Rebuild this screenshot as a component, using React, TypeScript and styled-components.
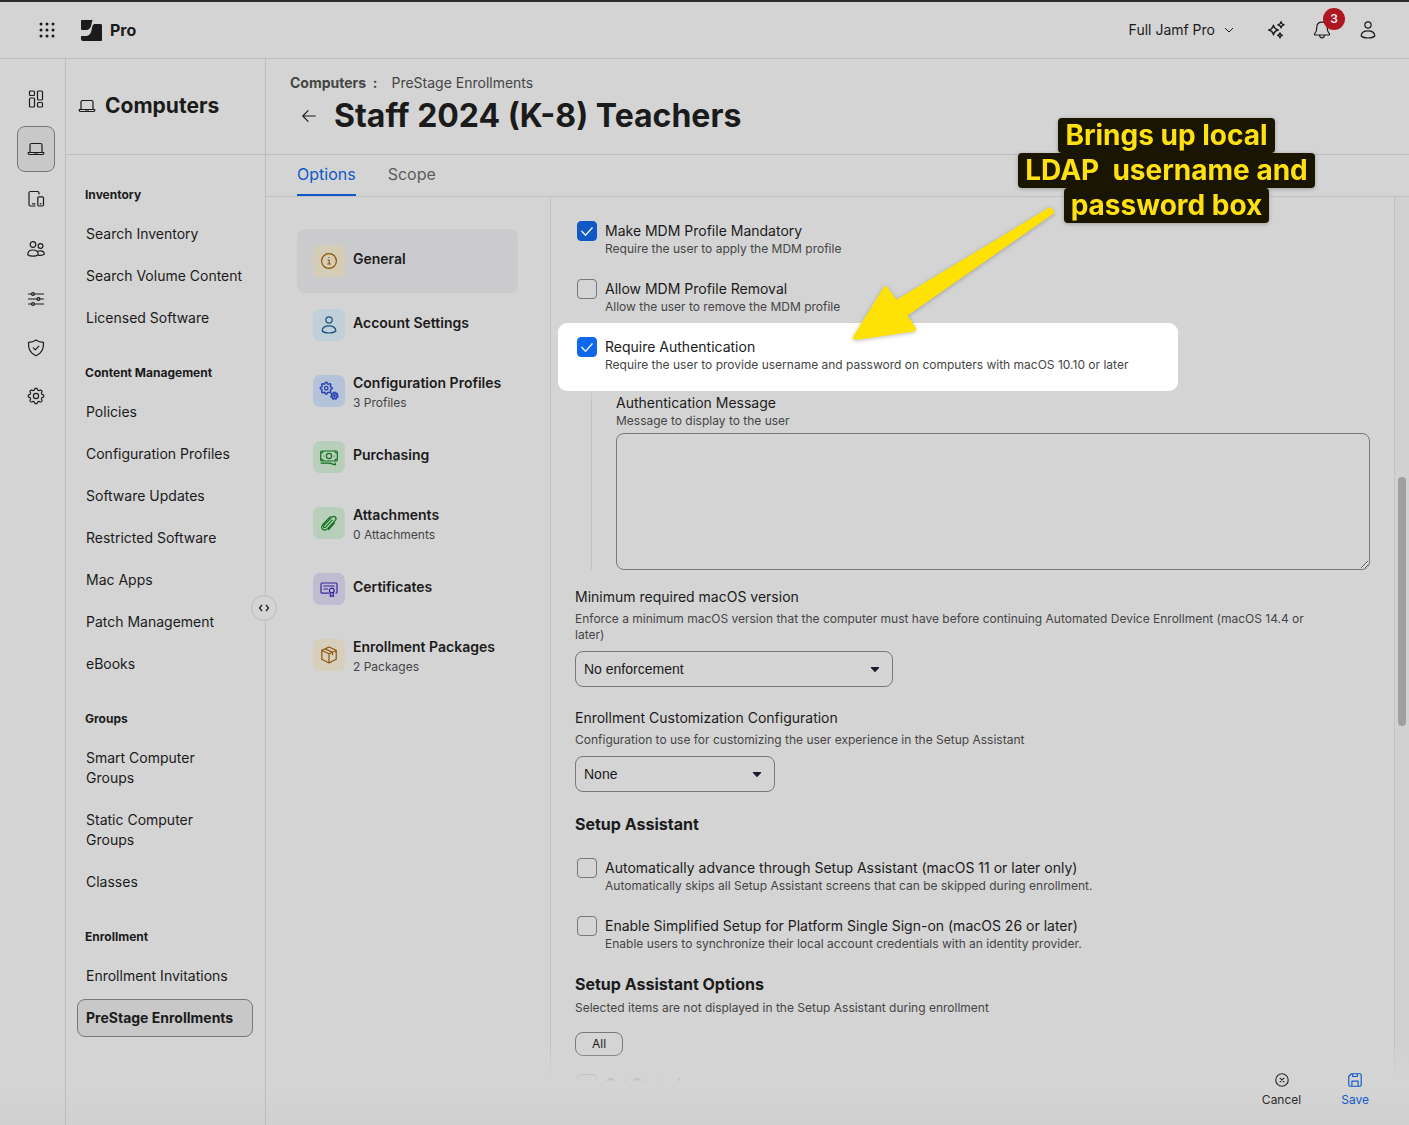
import React, { useState } from "react";
import styled, { createGlobalStyle } from "styled-components";

const c = {
  bg: "#d4d4d4",
  line: "#bdbdbd",
  softLine: "#c3c3c3",
  outline: "#777777",
  text: "#1b1b1b",
  muted: "#454545",
  selected: "#c8c8c8",
  blue: "#1158c7",
};

const GlobalStyle = createGlobalStyle`
  *, *::before, *::after { box-sizing: border-box; }
  body { margin: 0; }
  button, textarea, select, input { font: inherit; color: inherit; margin: 0; }
  button { background: none; border: 0; padding: 0; cursor: pointer; }
  a { color: inherit; text-decoration: none; }
  h1, h2, h3, p, ul { margin: 0; padding: 0; }
  ul { list-style: none; }
`;

const Shell = styled.div`
  position: relative;
  display: flex;
  flex-direction: column;
  height: 100vh;
  overflow: hidden;
  border-top: 2px solid #2f2d2e;
  background: linear-gradient(to bottom, ${c.bg} calc(100% - 36px), #d0d0d0);
  color: ${c.text};
  font-family: Inter, "Liberation Sans", sans-serif;
  font-size: 14px;
  line-height: 20px;
`;

const TopBar = styled.header`
  display: flex;
  align-items: center;
  justify-content: space-between;
  flex: none;
  height: 57px;
  padding: 0 32px 0 38px;
  border-bottom: 1px solid ${c.line};
`;

const Brand = styled.div`
  display: flex;
  align-items: center;
  gap: 8px;
  font-size: 16px;
  font-weight: 700;
`;

const IconButton = styled.button`
  position: relative;
  display: flex;
  align-items: center;
  justify-content: center;
  width: 18px;
  height: 20px;
`;

const AppsButton = styled(IconButton)`
  margin-right: 17px;
`;

const TopActions = styled.div`
  display: flex;
  align-items: center;
  gap: 28px;
`;

const SiteButton = styled.button`
  display: flex;
  align-items: center;
  gap: 8px;
  margin-right: 4px;
`;

const Badge = styled.span`
  position: absolute;
  left: 10px;
  bottom: 10px;
  display: flex;
  align-items: center;
  justify-content: center;
  width: 22px;
  height: 22px;
  border-radius: 50%;
  background: #ae1722;
  color: #ececec;
  font-size: 12px;
  font-weight: 600;
`;

const Body = styled.div`
  display: flex;
  flex: 1;
  min-height: 0;
`;

const Rail = styled.nav`
  display: flex;
  flex-direction: column;
  align-items: center;
  gap: 4px;
  flex: none;
  width: 66px;
  padding: 17px 0 0 6px;
  border-right: 1px solid ${c.line};
`;

const RailButton = styled.button<{ $active?: boolean; $compact?: boolean }>`
  display: flex;
  align-items: center;
  justify-content: center;
  width: 38px;
  height: ${(p) => (p.$compact ? 44 : 46)}px;
  border: 1px solid ${(p) => (p.$active ? c.outline : "transparent")};
  border-radius: 8px;
  background: ${(p) => (p.$active ? c.selected : "transparent")};
`;

const Side = styled.aside`
  position: relative;
  flex: none;
  width: 200px;
  border-right: 1px solid ${c.line};
`;

const SideHeader = styled.div`
  display: flex;
  align-items: center;
  gap: 9px;
  height: 96px;
  padding: 0 12px 2px;
  border-bottom: 1px solid ${c.line};
`;

const SideTitle = styled.h2`
  font-size: 21px;
  line-height: 28px;
  font-weight: 700;
`;

const SideNav = styled.nav`
  display: flex;
  flex-direction: column;
  gap: 28px;
  padding: 32px 12px 0 11px;
`;

const NavHeading = styled.h3`
  padding: 0 8px;
  margin-bottom: 12px;
  font-size: 12px;
  line-height: 16px;
  font-weight: 700;
`;

const NavList = styled.ul`
  display: flex;
  flex-direction: column;
  gap: 4px;
`;

const NavLink = styled.a<{ $active?: boolean }>`
  display: block;
  padding: 8px;
  border: 1px solid ${(p) => (p.$active ? c.outline : "transparent")};
  border-radius: 8px;
  background: ${(p) => (p.$active ? c.selected : "transparent")};
  font-weight: ${(p) => (p.$active ? 700 : 400)};
`;

const CollapseHandle = styled.button`
  position: absolute;
  top: 536px;
  right: -12px;
  display: flex;
  align-items: center;
  justify-content: center;
  width: 26px;
  height: 26px;
  border: 1px solid ${c.line};
  border-radius: 50%;
  background: ${c.bg};
`;

const Main = styled.main`
  display: flex;
  flex-direction: column;
  flex: 1;
  min-width: 0;
`;

const PageHeader = styled.div`
  flex: none;
  height: 96px;
  padding: 14px 24px 0;
  border-bottom: 1px solid ${c.line};
`;

const Crumbs = styled.div`
  display: flex;
  gap: 14px;
  color: ${c.muted};
`;

const TitleRow = styled.div`
  display: flex;
  align-items: center;
  gap: 16px;
  padding: 3px 0 0 10px;
`;

const Title = styled.h1`
  font-size: 32px;
  line-height: 40px;
  font-weight: 700;
`;

const Tabs = styled.div`
  display: flex;
  gap: 32px;
  flex: none;
  height: 42px;
  padding: 0 31px;
  border-bottom: 1px solid ${c.softLine};
`;

const Tab = styled.button<{ $active: boolean }>`
  height: 41px;
  padding-bottom: 1px;
  border-bottom: 2px solid ${(p) => (p.$active ? c.blue : "transparent")};
  color: ${(p) => (p.$active ? c.blue : "#5c5c5c")};
  font-size: 16px;
`;

const Workspace = styled.div`
  position: relative;
  display: flex;
  flex: 1;
  min-height: 0;
  overflow: hidden;

  &::after {
    content: "";
    position: absolute;
    inset: auto 0 0 0;
    height: 32px;
    background: linear-gradient(to bottom, rgba(212, 212, 212, 0), rgba(212, 212, 212, 0.8) 75%, rgba(212, 212, 212, 0.9));
    pointer-events: none;
  }
`;

const PayloadList = styled.ul`
  flex: none;
  width: 285px;
  padding: 32px 32px 0 31px;
  border-right: 1px solid ${c.softLine};
`;

const Payload = styled.button<{ $active?: boolean }>`
  display: flex;
  align-items: center;
  gap: 8px;
  width: 100%;
  height: ${(p) => (p.$active ? 64 : 66)}px;
  padding: 0 16px ${(p) => (p.$active ? 0 : 2)}px;
  border-radius: 8px;
  background: ${(p) => (p.$active ? "#cbcbcd" : "transparent")};
  text-align: left;
`;

const PayloadIcon = styled.span<{ $bg: string; $fg: string }>`
  display: flex;
  align-items: center;
  justify-content: center;
  flex: none;
  width: 32px;
  height: 32px;
  border-radius: 7px;
  background: ${(p) => p.$bg};
  color: ${(p) => p.$fg};
`;

const PayloadText = styled.span<{ $sub: boolean }>`
  display: flex;
  flex-direction: column;
  padding: ${(p) => (p.$sub ? "4px 0 0" : "0 0 4px")};
  font-weight: 600;
  white-space: nowrap;
`;

const PayloadSub = styled.small`
  color: ${c.muted};
  font-size: 12px;
  font-weight: 400;
`;

const Form = styled.form`
  display: flex;
  flex-direction: column;
  align-items: flex-start;
  flex: 1;
  min-width: 0;
  padding: 24px 24px 0;
  overflow: hidden;
`;

const CheckRow = styled.div<{ $spotlight?: boolean }>`
  display: flex;
  flex: none;
  gap: 8px;
  margin-bottom: 22px;
  padding-left: 2px;
  ${(p) =>
    p.$spotlight &&
    `
    align-self: flex-start;
    width: 620px;
    max-width: 100%;
    margin: -14px 0 0 -17px;
    padding: 14px 16px 18px 19px;
    border-radius: 9px;
    background: #ffffff;
  `}
`;

const Box = styled.span`
  position: relative;
  display: block;
  flex: none;
  width: 20px;
  height: 20px;

  svg {
    position: absolute;
    inset: 0;
    pointer-events: none;
  }
`;

const BoxInput = styled.input<{ $bright?: boolean }>`
  appearance: none;
  display: block;
  width: 20px;
  height: 20px;
  border: 1px solid ${c.outline};
  border-radius: 4px;

  &:checked {
    border-color: ${(p) => (p.$bright ? "#0f68ec" : c.blue)};
    background: ${(p) => (p.$bright ? "#0f68ec" : c.blue)};
  }
`;

const Label = styled.label`
  display: block;
`;

const Help = styled.p<{ $gap?: number }>`
  max-width: 760px;
  margin-top: ${(p) => p.$gap ?? 0}px;
  color: ${c.muted};
  font-size: 12px;
  line-height: 16px;
`;

const Nested = styled.div`
  display: flex;
  flex-direction: column;
  flex: none;
  align-self: stretch;
  margin: 2px 0 17px 16px;
  padding-left: 24px;
  border-left: 1px solid ${c.softLine};
`;

const MessageArea = styled.textarea`
  display: block;
  width: 100%;
  height: 137px;
  margin-top: 4px;
  padding: 8px;
  border: 1px solid ${c.outline};
  border-radius: 8px;
  background: transparent;
  resize: vertical;
`;

const Field = styled.div<{ $last?: boolean }>`
  flex: none;
  margin-bottom: ${(p) => (p.$last ? 22 : 21)}px;
`;

const SelectWrap = styled.div<{ $width: number }>`
  position: relative;
  width: ${(p) => p.$width}px;
  max-width: 100%;
  margin-top: 8px;

  svg {
    position: absolute;
    top: 16px;
    right: 12px;
    pointer-events: none;
  }
`;

const Select = styled.select`
  appearance: none;
  width: 100%;
  height: 36px;
  padding: 0 32px 0 8px;
  border: 1px solid ${c.outline};
  border-radius: 8px;
  background: transparent;
  font-family: "Liberation Sans", Arial, sans-serif;
`;

const SectionTitle = styled.h2<{ $gap: number }>`
  flex: none;
  margin-bottom: ${(p) => p.$gap}px;
  font-size: 16px;
  line-height: 20px;
  font-weight: 700;
`;

const AllButton = styled.button`
  flex: none;
  width: 48px;
  height: 24px;
  margin: 16px 0 18px;
  border: 1px solid ${c.outline};
  border-radius: 8px;
  font-size: 12px;
  line-height: 16px;
`;

const ScrollTrack = styled.div`
  flex: none;
  width: 15px;
  padding: 280px 3px 0;
  border-left: 1px solid ${c.softLine};
  background: #d1d1d1;
`;

const ScrollThumb = styled.div`
  width: 8px;
  height: 249px;
  border-radius: 4px;
  background: #9f9f9f;
`;

const Footer = styled.footer`
  position: relative;
  display: flex;
  justify-content: flex-end;
  gap: 40px;
  flex: none;
  height: 52px;
  margin-top: -8px;
  padding-right: 40px;
`;

const FooterButton = styled.button<{ $primary?: boolean }>`
  display: flex;
  flex-direction: column;
  align-items: center;
  align-self: flex-start;
  gap: 5px;
  color: ${(p) => (p.$primary ? c.blue : "#2c2c2c")};
  font-size: 12px;
  line-height: 16px;
`;

const Note = styled.div`
  position: absolute;
  top: 116px;
  right: 91px;
  width: 303px;
  color: #ffe010;
  font-size: 28px;
  line-height: 35px;
  font-weight: 700;
  text-align: center;
  white-space: pre;
  filter: drop-shadow(0 1px 2px rgba(0, 0, 0, 0.25));
`;

const NoteText = styled.span`
  display: inline-block;
  height: 35px;
  padding: 0 7px;
  border-radius: 4px;
  background: #191500;
  vertical-align: top;
`;

const Arrow = styled.svg`
  position: absolute;
  top: 198px;
  right: 346px;
  filter: drop-shadow(0 1px 2px rgba(0, 0, 0, 0.25));
`;

type IconProps = { size?: number; w?: number; children: React.ReactNode };

const Icon = ({ size = 18, w = 1.2, children }: IconProps) => (
  <svg
    width={size}
    height={size}
    viewBox="0 0 18 18"
    fill="none"
    stroke="currentColor"
    strokeWidth={w}
    strokeLinecap="round"
    strokeLinejoin="round"
    aria-hidden="true"
  >
    {children}
  </svg>
);

const gearPath = (cx: number, cy: number, r: number, teeth: number, depth: number) => {
  const points: string[] = [];
  const steps = teeth * 12;
  for (let i = 0; i < steps; i++) {
    const a = (i / steps) * Math.PI * 2;
    const wave = Math.max(-1, Math.min(1, Math.cos(a * teeth) * 1.8));
    const rr = r + (depth / 2) * wave;
    points.push(`${(cx + rr * Math.sin(a)).toFixed(2)} ${(cy - rr * Math.cos(a)).toFixed(2)}`);
  }
  return `M${points.join("L")}Z`;
};

const AppsIcon = () => (
  <svg width="18" height="18" viewBox="0 0 18 18" fill="currentColor" aria-hidden="true">
    {[3, 9, 15].map((y) => [3, 9, 15].map((x) => <circle key={`${x}-${y}`} cx={x} cy={y} r="1.5" />))}
  </svg>
);

const Logo = () => (
  <svg width="21" height="21" viewBox="0 0 21 21" fill="currentColor" aria-hidden="true">
    <path d="M1 0h10.700c-.8 1.200-.9 2.600-1.200 4.200-.7 3.700-2.300 5.800-6 5.800H1.600C.6 10 0 9.300 0 8.400V1c0-.6.4-1 1-1z" />
    <path d="M14 4h5.500c1 0 1.500.6 1.500 1.500V20c0 .6-.4 1-1 1H2c-1.200 0-2-.8-2-2v-3h4.500c4 0 5.400-2.600 6.100-6 .7-3.400.9-6 3.400-6z" />
  </svg>
);

const LaptopIcon = () => (
  <Icon>
    <path d="M3 12.500V5a1.500 1.500 0 0 1 1.500-1.500h9A1.500 1.500 0 0 1 15 5v7.500M1.200 12.500h15.600v.6a1.400 1.400 0 0 1-1.400 1.400H2.600a1.400 1.400 0 0 1-1.400-1.400zM7.500 12.900h3" />
  </Icon>
);

const DashboardIcon = () => (
  <Icon>
    <rect x="2.500" y="1" width="5" height="4.500" rx="1" />
    <rect x="2.500" y="8" width="5" height="9" rx="1" />
    <rect x="10.500" y="1" width="5" height="9" rx="1" />
    <rect x="10.500" y="12.500" width="5" height="4.500" rx="1" />
  </Icon>
);

const DevicesIcon = () => (
  <Icon>
    <path d="M12 4V3a1.500 1.500 0 0 0-1.500-1.500h-7A1.500 1.500 0 0 0 2 3v11.500A1.500 1.500 0 0 0 3.500 16H8M5.500 13.800H8" />
    <rect x="10.800" y="6.800" width="5.700" height="9.200" rx="1.200" />
    <path d="M13.200 13.800h.9" />
  </Icon>
);

const UsersIcon = () => (
  <Icon>
    <circle cx="6" cy="4.500" r="2.800" />
    <circle cx="13.500" cy="6" r="2.400" />
    <path d="M.8 14.700c0-3 2.200-4.700 5.200-4.700s5.200 1.700 5.200 4.700c-1.200 1-3 1.500-5.200 1.500S2 15.700.8 14.700zM11 11.300c.7-.3 1.500-.5 2.400-.5 2.300 0 3.900 1.300 3.900 3.400-.8.8-2 1.200-3.600 1.200-1 0-1.800-.1-2.500-.5" />
  </Icon>
);

const SlidersIcon = () => (
  <Icon>
    <path d="M1.500 4H4.500M7.500 4h9M1.500 9H10M13 9h3.500M1.500 14H4.500M7.500 14h9" />
    <circle cx="6" cy="4" r="1.400" />
    <circle cx="11.500" cy="9" r="1.400" />
    <circle cx="6" cy="14" r="1.400" />
  </Icon>
);

const ShieldIcon = () => (
  <Icon>
    <path d="M9 1c2 1.500 4.500 2.300 7.500 2.400.4 6-1.700 11-7.500 13.400C3.200 14.400 1.100 9.400 1.500 3.400 4.500 3.300 7 2.500 9 1zM6.300 8.900l2 2 3.500-3.800" />
  </Icon>
);

const GearIcon = () => (
  <Icon>
    <path d={gearPath(9, 9, 6.9, 8, 1.6)} />
    <circle cx="9" cy="9" r="2.600" />
  </Icon>
);

const UserIcon = () => (
  <Icon>
    <circle cx="9" cy="4" r="3.200" />
    <path d="M2.200 15c0-3.200 2.800-5.200 6.800-5.200s6.800 2 6.800 5.200c-1.300 1.300-3.700 2-6.800 2s-5.500-.7-6.800-2z" />
  </Icon>
);

const SparkleIcon = () => (
  <Icon w={1.4}>
    <path d="M6.500 4.200c.6 3 1.800 4.200 4.800 4.800-3 .6-4.200 1.800-4.800 4.800C5.900 10.800 4.700 9.600 1.700 9c3-.6 4.200-1.800 4.800-4.800zM14 .8c.4 1.900 1.100 2.600 3 3-1.900.4-2.600 1.100-3 3-.4-1.900-1.100-2.600-3-3 1.900-.4 2.600-1.100 3-3zM13 12c.3 1.500.9 2.100 2.400 2.400-1.500.3-2.100.9-2.400 2.400-.3-1.500-.9-2.100-2.400-2.400 1.500-.3 2.100-.9 2.400-2.400z" />
  </Icon>
);

const BellIcon = () => (
  <Icon>
    <path d="M9 1.200c-3.300 0-5.200 2.200-5.200 5.200 0 3.200-.8 5-2.100 6.200-.5.600-.2 1.400.6 1.400h13.400c.8 0 1.100-.8.6-1.400-1.300-1.200-2.100-3-2.100-6.200 0-3-1.900-5.200-5.200-5.200zM6.500 14.200c.2 1.600 1.200 2.600 2.500 2.600s2.300-1 2.500-2.600" />
  </Icon>
);

const InfoIcon = () => (
  <Icon>
    <circle cx="9" cy="9" r="7.400" />
    <path d="M8 8h1.200v4M7.800 12h2.800M8.900 5.500h.2" />
  </Icon>
);

const GearsIcon = () => (
  <Icon size={20}>
    <path d={gearPath(6.5, 6.5, 4.7, 8, 1.3)} />
    <circle cx="6.500" cy="6.500" r="1.600" />
    <path d={gearPath(13.9, 13.3, 2.7, 7, 1)} />
    <circle cx="13.900" cy="13.300" r=".7" />
  </Icon>
);

const CashIcon = () => (
  <Icon>
    <rect x=".7" y="3" width="16.600" height="10" rx="1" />
    <circle cx="9" cy="8" r="2.600" />
    <path d="M3.800 8h.1M14.200 8h.1M1.200 15.200h8.300l5.800 1.600V15M1.500 5c1 0 1.500-.6 1.500-1.500M16.500 5c-1 0-1.500-.6-1.500-1.500M1.500 11c1 0 1.500.6 1.500 1.500M16.500 11c-1 0-1.500.6-1.500 1.500" />
  </Icon>
);

const ClipIcon = () => (
  <Icon>
    <path d="M12.200 6.200l-6.600 7c-1.400 1.300-3-.2-1.800-1.600l8-8.400c2.300-2.200 5.700.4 3.500 3.200l-7.600 8.300c-3.200 3.300-8 .1-5.200-3.700l7.800-8.400M14.400 9.200l-5.800 6.300" />
  </Icon>
);

const CertificateIcon = () => (
  <Icon>
    <path d="M8.500 13.200H2.200A1.200 1.200 0 0 1 1 12V4.200A1.200 1.200 0 0 1 2.200 3h13.600A1.200 1.200 0 0 1 17 4.200V12a1.200 1.200 0 0 1-1 1.200M3.800 6h10.400M3.800 9h4" />
    <circle cx="11.800" cy="10.500" r="2.400" />
    <path d="M10.300 12.500v4l1.500-.8 1.500.8v-4" />
  </Icon>
);

const PackageIcon = () => (
  <Icon>
    <path d="M9 1l7.200 3.300v8.900L9 17l-7.200-3.800V4.300zM1.800 4.500L9 7.800l7.200-3.300M9 7.800V17M5.200 2.900l7.300 3.400v2.400" />
  </Icon>
);

const Caret = () => (
  <svg width="12" height="6" viewBox="0 0 12 6" aria-hidden="true">
    <path d="M2.400 0h7.200c.5 0 .7.600.4.900L6.500 4.700c-.3.300-.7.300-1 0L2 .9c-.3-.3-.1-.9.400-.9z" fill="#191c2e" />
  </svg>
);

const Check = () => (
  <svg width="20" height="20" viewBox="0 0 20 20" fill="none" aria-hidden="true">
    <path d="M4.800 10.200l3.700 4 6.700-7.500" stroke="#e9eefa" strokeWidth="1.400" strokeLinecap="round" strokeLinejoin="round" />
  </svg>
);

type CheckFieldProps = {
  id: string;
  label: string;
  help?: string;
  on?: boolean;
  spotlight?: boolean;
};

const CheckField = ({ id, label, help, on = false, spotlight }: CheckFieldProps) => {
  const [checked, setChecked] = useState(on);
  return (
    <CheckRow $spotlight={spotlight}>
      <Box>
        <BoxInput
          id={id}
          type="checkbox"
          $bright={spotlight}
          checked={checked}
          onChange={(e) => setChecked(e.target.checked)}
        />
        {checked && <Check />}
      </Box>
      <div>
        <Label htmlFor={id}>{label}</Label>
        {help && <Help>{help}</Help>}
      </div>
    </CheckRow>
  );
};

const navSections = [
  { title: "Inventory", items: ["Search Inventory", "Search Volume Content", "Licensed Software"] },
  {
    title: "Content Management",
    items: [
      "Policies",
      "Configuration Profiles",
      "Software Updates",
      "Restricted Software",
      "Mac Apps",
      "Patch Management",
      "eBooks",
    ],
  },
  { title: "Groups", items: ["Smart Computer Groups", "Static Computer Groups", "Classes"] },
  { title: "Enrollment", items: ["Enrollment Invitations", "PreStage Enrollments"] },
];

const payloads = [
  { name: "General", bg: "#d5cdb6", fg: "#8f540c", icon: <InfoIcon /> },
  { name: "Account Settings", bg: "#bfd0d9", fg: "#1b5180", icon: <UserIcon /> },
  { name: "Configuration Profiles", sub: "3 Profiles", bg: "#b4c3d9", fg: "#233fae", icon: <GearsIcon /> },
  { name: "Purchasing", bg: "#b7cfbb", fg: "#12701c", icon: <CashIcon /> },
  { name: "Attachments", sub: "0 Attachments", bg: "#b7cfbb", fg: "#12701c", icon: <ClipIcon /> },
  { name: "Certificates", bg: "#c0bdd3", fg: "#3a239c", icon: <CertificateIcon /> },
  { name: "Enrollment Packages", sub: "2 Packages", bg: "#d7cfbb", fg: "#8f540c", icon: <PackageIcon /> },
];

const railItems = [
  { name: "Dashboard", icon: <DashboardIcon /> },
  { name: "Computers", icon: <LaptopIcon /> },
  { name: "Devices", icon: <DevicesIcon /> },
  { name: "Users", icon: <UsersIcon /> },
  { name: "Blueprints", icon: <SlidersIcon /> },
  { name: "Security", icon: <ShieldIcon />, compact: true },
  { name: "Settings", icon: <GearIcon />, compact: true },
];

export default function App() {
  const [tab, setTab] = useState("Options");

  return (
    <>
      <GlobalStyle />
      <Shell>
        <TopBar>
          <Brand>
            <AppsButton aria-label="Apps">
              <AppsIcon />
            </AppsButton>
            <Logo />
            <span>Pro</span>
          </Brand>
          <TopActions>
            <SiteButton>
              Full Jamf Pro
              <svg width="12" height="8" viewBox="0 0 12 8" fill="none" stroke="currentColor" aria-hidden="true">
                <path d="M2 2l4 4 4-4" />
              </svg>
            </SiteButton>
            <IconButton aria-label="Assistant">
              <SparkleIcon />
            </IconButton>
            <IconButton aria-label="Notifications">
              <BellIcon />
              <Badge>3</Badge>
            </IconButton>
            <IconButton aria-label="Account">
              <UserIcon />
            </IconButton>
          </TopActions>
        </TopBar>

        <Body>
          <Rail aria-label="Products">
            {railItems.map((item) => (
              <RailButton
                key={item.name}
                aria-label={item.name}
                $active={item.name === "Computers"}
                $compact={item.compact}
              >
                {item.icon}
              </RailButton>
            ))}
          </Rail>

          <Side>
            <SideHeader>
              <LaptopIcon />
              <SideTitle>Computers</SideTitle>
            </SideHeader>
            <SideNav aria-label="Computers">
              {navSections.map((section) => (
                <section key={section.title}>
                  <NavHeading>{section.title}</NavHeading>
                  <NavList>
                    {section.items.map((item) => (
                      <li key={item}>
                        <NavLink href="#" $active={item === "PreStage Enrollments"}>
                          {item}
                        </NavLink>
                      </li>
                    ))}
                  </NavList>
                </section>
              ))}
            </SideNav>
            <CollapseHandle aria-label="Collapse sidebar">
              <svg width="12" height="8" viewBox="0 0 12 8" fill="none" stroke="currentColor" strokeWidth="1.200" aria-hidden="true">
                <path d="M4 1L1.500 4 4 7M8 1l2.500 3L8 7" />
              </svg>
            </CollapseHandle>
          </Side>

          <Main>
            <PageHeader>
              <Crumbs>
                <a href="#">
                  <strong>Computers&nbsp; :</strong>
                </a>
                <a href="#">PreStage Enrollments</a>
              </Crumbs>
              <TitleRow>
                <IconButton aria-label="Back">
                  <Icon size={16}>
                    <path d="M16 9H2M8 3L2 9l6 6" />
                  </Icon>
                </IconButton>
                <Title>Staff 2024 (K-8) Teachers</Title>
              </TitleRow>
            </PageHeader>

            <Tabs role="tablist">
              {["Options", "Scope"].map((name) => (
                <Tab key={name} role="tab" aria-selected={tab === name} $active={tab === name} onClick={() => setTab(name)}>
                  {name}
                </Tab>
              ))}
            </Tabs>

            <Workspace>
              <PayloadList>
                {payloads.map((p) => (
                  <li key={p.name}>
                    <Payload $active={p.name === "General"}>
                      <PayloadIcon $bg={p.bg} $fg={p.fg}>
                        {p.icon}
                      </PayloadIcon>
                      <PayloadText $sub={Boolean(p.sub)}>
                        {p.name}
                        {p.sub && <PayloadSub>{p.sub}</PayloadSub>}
                      </PayloadText>
                    </Payload>
                  </li>
                ))}
              </PayloadList>

              <Form onSubmit={(e) => e.preventDefault()}>
                <CheckField
                  id="mandatory"
                  label="Make MDM Profile Mandatory"
                  help="Require the user to apply the MDM profile"
                  on
                />
                <CheckField
                  id="removal"
                  label="Allow MDM Profile Removal"
                  help="Allow the user to remove the MDM profile"
                />
                <CheckField
                  id="auth"
                  label="Require Authentication"
                  help="Require the user to provide username and password on computers with macOS 10.10 or later"
                  on
                  spotlight
                />
                <Nested>
                  <Label htmlFor="message">Authentication Message</Label>
                  <Help>Message to display to the user</Help>
                  <MessageArea id="message" />
                </Nested>
                <Field>
                  <Label htmlFor="version">Minimum required macOS version</Label>
                  <Help $gap={4}>
                    Enforce a minimum macOS version that the computer must have before continuing Automated Device
                    Enrollment (macOS 14.4 or later)
                  </Help>
                  <SelectWrap $width={318}>
                    <Select id="version">
                      <option>No enforcement</option>
                    </Select>
                    <Caret />
                  </SelectWrap>
                </Field>
                <Field $last>
                  <Label htmlFor="customization">Enrollment Customization Configuration</Label>
                  <Help $gap={4}>Configuration to use for customizing the user experience in the Setup Assistant</Help>
                  <SelectWrap $width={200}>
                    <Select id="customization">
                      <option>None</option>
                    </Select>
                    <Caret />
                  </SelectWrap>
                </Field>
                <SectionTitle $gap={24}>Setup Assistant</SectionTitle>
                <CheckField
                  id="advance"
                  label="Automatically advance through Setup Assistant (macOS 11 or later only)"
                  help="Automatically skips all Setup Assistant screens that can be skipped during enrollment."
                />
                <CheckField
                  id="simplified"
                  label="Enable Simplified Setup for Platform Single Sign-on (macOS 26 or later)"
                  help="Enable users to synchronize their local account credentials with an identity provider."
                />
                <SectionTitle $gap={6}>Setup Assistant Options</SectionTitle>
                <Help>Selected items are not displayed in the Setup Assistant during enrollment</Help>
                <AllButton type="button">All</AllButton>
                <CheckField id="started" label="Get Started" />
              </Form>

              <ScrollTrack>
                <ScrollThumb />
              </ScrollTrack>
            </Workspace>

            <Footer>
              <FooterButton>
                <Icon size={14} w={1.5}>
                  <circle cx="9" cy="9" r="8" />
                  <path d="M6.500 6.500l5 5M11.500 6.500l-5 5" />
                </Icon>
                Cancel
              </FooterButton>
              <FooterButton $primary>
                <Icon size={14} w={1.5}>
                  <path d="M4.500 1H15.500A1.500 1.500 0 0 1 17 2.500v13a1.500 1.500 0 0 1-1.500 1.500h-13A1.500 1.500 0 0 1 1 15.500V4.500zM6 1v3.500h6V1M5 17v-6.500h8V17" />
                </Icon>
                Save
              </FooterButton>
            </Footer>
          </Main>
        </Body>

        <Arrow width="220" height="150" viewBox="0 0 220 150" aria-hidden="true">
          <path
            d="M12.500 137.500L42.500 89L53 103L207 10L208.500 12L61 115L70.500 129Z"
            fill="#ffe205"
            stroke="#ffe205"
            strokeWidth="5"
            strokeLinejoin="round"
          />
        </Arrow>
        <Note>
          <NoteText>Brings up local</NoteText>
          <br />
          <NoteText>{"LDAP  username and"}</NoteText>
          <br />
          <NoteText>password box</NoteText>
        </Note>
      </Shell>
    </>
  );
}
